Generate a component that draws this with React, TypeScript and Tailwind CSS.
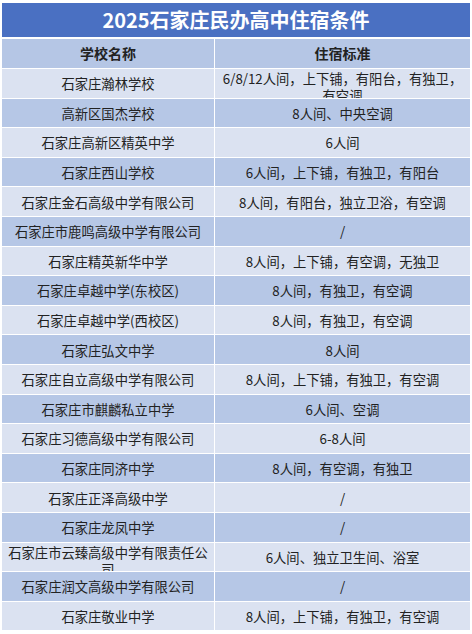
const rows: [string, string][] = [
  ["石家庄瀚林学校", "6/8/12人间，上下铺，有阳台，有独卫，有空调"],
  ["高新区国杰学校", "8人间、中央空调"],
  ["石家庄高新区精英中学", "6人间"],
  ["石家庄西山学校", "6人间，上下铺，有独卫，有阳台"],
  ["石家庄金石高级中学有限公司", "8人间，有阳台，独立卫浴，有空调"],
  ["石家庄市鹿鸣高级中学有限公司", "/"],
  ["石家庄精英新华中学", "8人间，上下铺，有空调，无独卫"],
  ["石家庄卓越中学(东校区)", "8人间，有独卫，有空调"],
  ["石家庄卓越中学(西校区)", "8人间，有独卫，有空调"],
  ["石家庄弘文中学", "8人间"],
  ["石家庄自立高级中学有限公司", "8人间，上下铺，有独卫，有空调"],
  ["石家庄市麒麟私立中学", "6人间、空调"],
  ["石家庄习德高级中学有限公司", "6-8人间"],
  ["石家庄同济中学", "8人间，有空调，有独卫"],
  ["石家庄正泽高级中学", "/"],
  ["石家庄龙凤中学", "/"],
  ["石家庄市云臻高级中学有限责任公司", "6人间、独立卫生间、浴室"],
  ["石家庄润文高级中学有限公司", "/"],
  ["石家庄敬业中学", "8人间，上下铺，有独卫，有空调"],
];

const FONT = "font-['Noto_Sans_CJK_SC','Noto_Sans',sans-serif]";

function Cell({ text, wide }: { text: string; wide?: boolean }) {
  return (
    <div
      className={
        (wide ? "flex-1 " : "w-[212px] ") +
        "h-full overflow-hidden px-[3px] text-center"
      }
    >
      <div className="flex min-h-full items-center justify-center pt-px">
        <span className="leading-[17px]">{text}</span>
      </div>
    </div>
  );
}

export default function App() {
  return (
    <div className={`min-h-[634px] bg-white px-[2px] pt-[3px] text-[13.3px] text-[#222] ${FONT}`}>
      <div className="flex h-[34px] items-center justify-center bg-[#4a70c2] text-[20px] font-bold text-white">
        2025石家庄民办高中住宿条件
      </div>
      <div className="mt-[2px] flex h-[29px] gap-px bg-white font-bold">
        <div className="flex w-[212px] items-center justify-center bg-[#b5c6e5] text-[14px]">学校名称</div>
        <div className="flex flex-1 items-center justify-center bg-[#b5c6e5] text-[14px]">住宿标准</div>
      </div>
      <div className="mt-px flex flex-col gap-px">
        {rows.map(([name, info], i) => (
          <div
            key={name}
            className={
              "flex h-[28.6px] gap-px " +
              (i % 2 === 0 ? "[&>div]:bg-[#dbe2f1]" : "[&>div]:bg-[#b6c7e6]")
            }
          >
            <Cell text={name} />
            <Cell text={info} wide />
          </div>
        ))}
      </div>
    </div>
  );
}
